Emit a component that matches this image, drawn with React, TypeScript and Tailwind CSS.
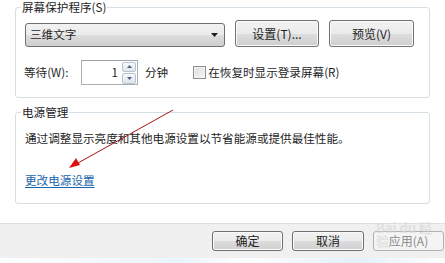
import { type ReactNode } from "react";

const FONT = {
  fontFamily: '"Noto Sans CJK SC", "Noto Sans", "Liberation Sans", sans-serif',
};

function WinButton({
  children,
  className = "",
  disabled = false,
}: {
  children: ReactNode;
  className?: string;
  disabled?: boolean;
}) {
  return (
    <div
      className={
        "flex items-center justify-center rounded-[3px] border text-[12px] leading-none " +
        (disabled
          ? "border-[#adb2b5] bg-[#f4f4f4] text-[#8a8a8a] "
          : "border-[#707070] bg-[linear-gradient(#f2f2f2_0%,#ebebeb_50%,#dddddd_51%,#cfcfcf_100%)] text-[#1e1e1e] shadow-[inset_0_0_0_1px_#fbfbfb] ") +
        className
      }
    >
      {children}
    </div>
  );
}

function GroupBox({
  title,
  children,
  className = "",
}: {
  title: string;
  children: ReactNode;
  className?: string;
}) {
  return (
    <fieldset
      className={
        "rounded-[3px] border border-[#d5dfe5] pl-[9px] pr-[9px] " + className
      }
    >
      <legend className="ml-[-4px] px-[1px] text-[11.6px] leading-[14px] text-[#1e1e1e]">
        {title}
      </legend>
      {children}
    </fieldset>
  );
}

export default function App() {
  return (
    <div
      className="relative flex h-[263px] w-[445px] flex-col overflow-hidden bg-white"
      style={FONT}
    >
      <div className="flex h-[223px] flex-col px-[15px] pr-[15px]">
        <GroupBox title="屏幕保护程序(S)" className="pb-[12px]">
          <div className="flex items-end pt-[6px]">
            <div className="flex h-[24px] w-[200px] items-center justify-between rounded-[3px] border border-[#707070] bg-[linear-gradient(#f2f2f2_0%,#ebebeb_50%,#dddddd_51%,#cfcfcf_100%)] pl-[4px] pr-[6px] text-[11.6px] text-[#1e1e1e]">
              <span>三维文字</span>
              <svg width="7" height="4" viewBox="0 0 7 4">
                <path d="M0 0h7L3.5 4z" fill="#1e1e1e" />
              </svg>
            </div>
            <WinButton className="ml-[10px] h-[27px] w-[84px]">
              设置(T)...
            </WinButton>
            <WinButton className="ml-[10px] h-[27px] w-[85px]">
              预览(V)
            </WinButton>
          </div>
          <div className="mt-[13px] flex items-center text-[11.6px] text-[#1e1e1e]">
            <span className="ml-[-1px] w-[57px]">等待(W):</span>
            <div className="flex h-[25px] w-[57px] items-center border border-[#abadb3] border-t-[#9ea3ab] bg-white">
              <span className="flex-1 pr-[4px] text-right">1</span>
              <div className="mr-[1px] flex h-[22px] w-[14px] flex-col gap-[1px]">
                <div className="flex flex-1 items-center justify-center rounded-[2px] border border-[#b6c3d0] bg-[linear-gradient(#f7f9fb,#dfe5ea)]">
                  <svg width="5" height="3" viewBox="0 0 5 3">
                    <path d="M0 3h5L2.5 0z" fill="#4d6185" />
                  </svg>
                </div>
                <div className="flex flex-1 items-center justify-center rounded-[2px] border border-[#b6c3d0] bg-[linear-gradient(#f7f9fb,#dfe5ea)]">
                  <svg width="5" height="3" viewBox="0 0 5 3">
                    <path d="M0 0h5L2.5 3z" fill="#4d6185" />
                  </svg>
                </div>
              </div>
            </div>
            <span className="ml-[7px]">分钟</span>
            <div className="ml-[25px] h-[13px] w-[13px] border border-[#8e8f8f] bg-[linear-gradient(135deg,#dcdcdc,#f8f8f8)] shadow-[inset_0_0_0_1px_#f4f4f4]" />
            <span className="ml-[2px]">在恢复时显示登录屏幕(R)</span>
          </div>
        </GroupBox>

        <GroupBox title="电源管理" className="mt-[7px] pb-[16px]">
          <p className="mt-[12px] text-[11.6px] leading-[14px] text-[#1e1e1e]">
            通过调整显示亮度和其他电源设置以节省能源或提供最佳性能。
          </p>
          <p className="mt-[28px] text-[11.6px] leading-[14px] text-[#1864ab] underline underline-offset-[2px]">
            更改电源设置
          </p>
        </GroupBox>
      </div>

      <div className="flex h-[35px] items-center justify-end gap-[9px] border-t border-[#dfdfdf] bg-[#f0f0f0] pr-[1px]">
        <WinButton className="h-[20px] w-[71px]">确定</WinButton>
        <WinButton className="h-[20px] w-[72px]">取消</WinButton>
        <WinButton disabled className="h-[20px] w-[71px]">
          应用(A)
        </WinButton>
      </div>
      <div className="flex-1 bg-[linear-gradient(90deg,#ffffff_0%,#eaf4fb_40%,#ffffff_55%,#e4f0fa_80%,#ffffff_100%)]" />

      <span className="pointer-events-none absolute left-[376px] top-[221px] text-[13px] font-bold leading-none text-[#d6d6d6] opacity-60">
        Bai du 经验
      </span>

      <svg
        className="pointer-events-none absolute left-0 top-0"
        width="445"
        height="263"
      >
        <line x1="173" y1="110" x2="78" y2="163" stroke="#a31515" strokeWidth="1" />
        <path d="M69 168 L76 158 L80 165 Z" fill="#e01010" />
      </svg>
    </div>
  );
}
